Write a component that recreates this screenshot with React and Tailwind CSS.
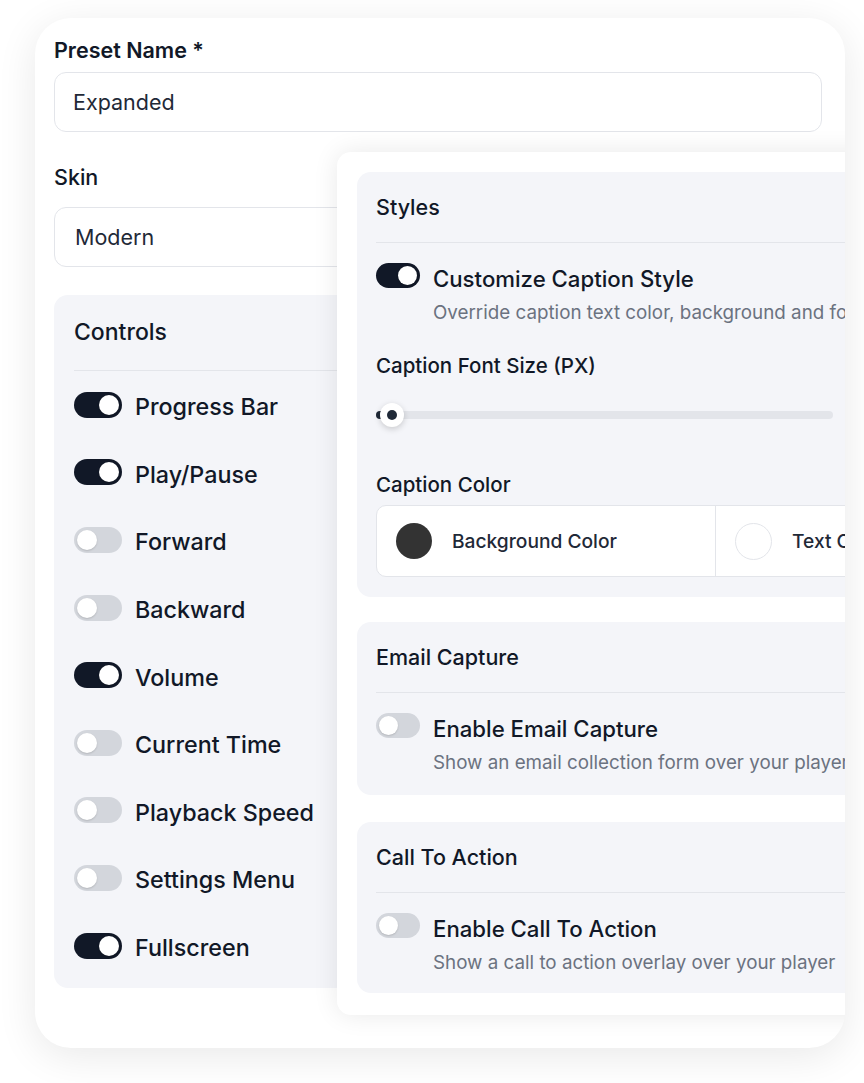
import React from "react";

const controls = [
  { label: "Progress Bar", on: true },
  { label: "Play/Pause", on: true },
  { label: "Forward", on: false },
  { label: "Backward", on: false },
  { label: "Volume", on: true },
  { label: "Current Time", on: false },
  { label: "Playback Speed", on: false },
  { label: "Settings Menu", on: false },
  { label: "Fullscreen", on: true },
];

function Toggle({ on, big }) {
  const size = big ? "w-[48px] h-[26px] p-[3px]" : "w-[44px] h-[25px] p-[3px]";
  const knob = big ? "w-[20px] h-[20px]" : "w-[19px] h-[19px]";
  return (
    <span
      className={`flex shrink-0 items-center rounded-full ${size} ${
        on ? "justify-end bg-[#111827]" : "justify-start bg-[#d3d6dc]"
      }`}
    >
      <span className={`${knob} rounded-full bg-white shadow-[0_1px_2px_rgba(0,0,0,0.15)]`} />
    </span>
  );
}

function SwitchRow({ title, desc, on }) {
  return (
    <div className="flex items-start gap-[13px]">
      <Toggle on={on} />
      <div className="flex flex-col">
        <span className="mt-[2px] whitespace-nowrap text-[22.2px] leading-[28px] font-medium text-[#111827]">{title}</span>
        <span className="mt-[7px] whitespace-nowrap text-[18.8px] leading-[26px] text-[#6b7280]">{desc}</span>
      </div>
    </div>
  );
}

function Section({ title, className, children }) {
  return (
    <div className={`rounded-[14px] bg-[#f4f5f9] px-[19px] ${className}`}>
      <div className="border-b border-[#e3e5ea] pt-[21px] pb-[21px] text-[21.5px] leading-[28px] font-medium text-[#111827]">
        {title}
      </div>
      {children}
    </div>
  );
}

export default function App() {
  return (
    <div className="w-[864px] h-[1083px] overflow-hidden bg-white font-['Inter',sans-serif] pt-[18px] pl-[35px]">
      <div className="relative w-[810px] h-[1030px] overflow-hidden rounded-[36px] bg-white shadow-[0_8px_40px_rgba(0,0,0,0.09)] pl-[19px] pt-[18px]">
        <label className="block text-[21.5px] leading-[28px] font-semibold text-[#111827]">Preset Name *</label>
        <div className="mt-[8px] flex h-[60px] w-[768px] items-center rounded-[12px] border border-[#e3e5ea] bg-white pl-[18px] text-[21.5px] text-[#1f2937]">
          Expanded
        </div>

        <label className="mt-[31px] block text-[21.5px] leading-[28px] font-medium text-[#111827]">Skin</label>
        <div className="mt-[16px] flex h-[60px] w-[768px] items-center rounded-[12px] border border-[#e3e5ea] bg-white pl-[20px] text-[21.5px] text-[#1f2937]">
          Modern
        </div>

        {/* controls card */}
        <div className="mt-[28px] h-[693px] w-[768px] rounded-[14px] bg-[#f4f5f9] px-[20px]">
          <div className="border-b border-[#e3e5ea] pt-[23px] pb-[24px] text-[23px] leading-[28px] font-medium text-[#111827]">
            Controls
          </div>
          <div className="flex flex-col">
            {controls.map((c) => (
              <div key={c.label} className="flex h-[67.6px] items-center gap-[13px]">
                <Toggle on={c.on} big />
                <span className="mt-[5px] text-[23.3px] leading-[28px] font-medium text-[#111827]">{c.label}</span>
              </div>
            ))}
          </div>
        </div>

        {/* styles panel laid over the form */}
        <div className="absolute left-[302px] top-[134px] h-[863px] w-[720px] rounded-[14px] bg-white p-[20px] shadow-[0_0_26px_rgba(0,0,0,0.09)]">
          <Section title="Styles" className="h-[425px]">
            <div className="mt-[20px]">
              <SwitchRow
                on
                title="Customize Caption Style"
                desc="Override caption text color, background and font size"
              />
            </div>
            <div className="mt-[26px] text-[20.5px] leading-[28px] font-medium text-[#111827]">Caption Font Size (PX)</div>
            <div className="relative mt-[22px] flex h-[26px] w-[457px] items-center">
              <div className="h-[8px] w-full rounded-full bg-[#e3e5ea]">
                <div className="h-[8px] w-[16px] rounded-full bg-[#1f2937]" />
              </div>
              <div className="absolute left-[4px] top-[1px] flex h-[24px] w-[24px] items-center justify-center rounded-full bg-white shadow-[0_2px_6px_rgba(0,0,0,0.18)]">
                <div className="h-[10px] w-[10px] rounded-full bg-[#1f2937]" />
              </div>
            </div>
            <div className="mt-[43px] text-[20.5px] leading-[28px] font-medium text-[#111827]">Caption Color</div>
            <div className="mt-[6px] grid h-[72px] w-[680px] grid-cols-2 rounded-[10px] border border-[#e3e5ea] bg-white">
              <div className="flex items-center gap-[20px] border-r border-[#e3e5ea] pl-[19px]">
                <span className="h-[36px] w-[36px] rounded-full bg-[#333333]" />
                <span className="text-[19.2px] font-medium text-[#1f2937]">Background Color</span>
              </div>
              <div className="flex items-center gap-[20px] pl-[19px]">
                <span className="h-[37px] w-[37px] rounded-full border border-[#e3e5ea] bg-white" />
                <span className="text-[19.2px] font-medium text-[#1f2937]">Text Color</span>
              </div>
            </div>
          </Section>

          <Section title="Email Capture" className="mt-[25px] h-[173px]">
            <div className="mt-[20px]">
              <SwitchRow
                title="Enable Email Capture"
                desc="Show an email collection form over your player"
              />
            </div>
          </Section>

          <Section title="Call To Action" className="mt-[27px] h-[171px]">
            <div className="mt-[20px]">
              <SwitchRow title="Enable Call To Action" desc="Show a call to action overlay over your player" />
            </div>
          </Section>
        </div>
      </div>
    </div>
  );
}
